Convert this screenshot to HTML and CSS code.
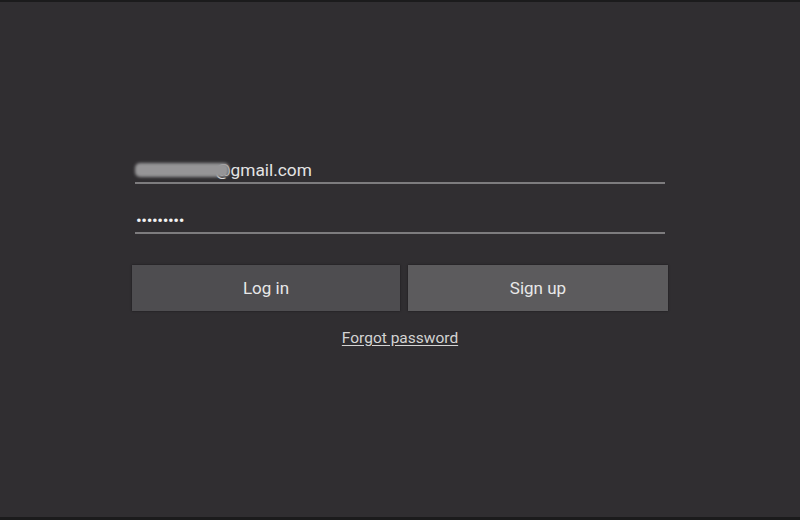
FILE: index.html
```html
<!DOCTYPE html>
<html lang="en">
<head>
<meta charset="utf-8">
<title>Log in</title>
<link rel="stylesheet" href="styles.css">
</head>
<body>
<main class="screen">
  <form class="login">
    <div class="field">
      <span class="redacted"></span><span class="value">@gmail.com</span>
    </div>
    <div class="field field-pass">
      <span class="dots">•••••••••</span>
    </div>
    <div class="actions">
      <button type="button" class="btn btn-login">Log in</button>
      <button type="button" class="btn btn-signup">Sign up</button>
    </div>
    <a class="forgot" href="#">Forgot password</a>
  </form>
</main>
</body>
</html>
```
FILE: styles.css
```css
html, body {
  margin: 0;
  padding: 0;
  height: 520px;
  overflow: hidden;
}
body {
  background: #302e31;
  font-family: Roboto, "Liberation Sans", sans-serif;
  color: #e6e6e6;
}
.screen {
  box-sizing: border-box;
  height: 520px;
  border-top: 2px solid #1b1b1c;
  border-bottom: 3px solid #1b1b1c;
  display: flex;
  justify-content: center;
}
.login {
  width: 536px;
  padding-top: 156px;
  display: flex;
  flex-direction: column;
}
.field {
  margin: 0 3px;
  height: 24px;
  line-height: 24px;
  border-bottom: 2px solid #7d7c7e;
  font-size: 17.3px;
  display: flex;
  align-items: center;
  white-space: nowrap;
}
.redacted {
  display: inline-block;
  width: 94px;
  height: 14px;
  margin-right: -14px;
  background: #969597;
  filter: blur(1.8px);
  border-radius: 5px;
  position: relative;
  z-index: 1;
}
.value {
  color: #e4e4e4;
}
.field-pass {
  margin-top: 24px;
}
.dots {
  font-size: 17px;
  letter-spacing: -0.4px;
  padding-left: 1px;
  color: #f2f2f2;
}
.actions {
  margin-top: 31px;
  display: flex;
  gap: 8px;
}
.btn {
  height: 46px;
  border: 0;
  margin: 0;
  padding: 0;
  font-family: Roboto, "Liberation Sans", sans-serif;
  font-size: 17px;
  color: #e8e8e8;
  box-shadow: 0 0 2px rgba(0, 0, 0, 0.5);
}
.btn-login {
  width: 268px;
  background: #4e4d50;
}
.btn-signup {
  width: 260px;
  background: #5c5b5d;
}
.forgot {
  align-self: center;
  margin-top: 17px;
  font-size: 15.5px;
  line-height: 20px;
  color: #d4d4d4;
  text-decoration: underline;
  text-underline-offset: 2px;
}
```
